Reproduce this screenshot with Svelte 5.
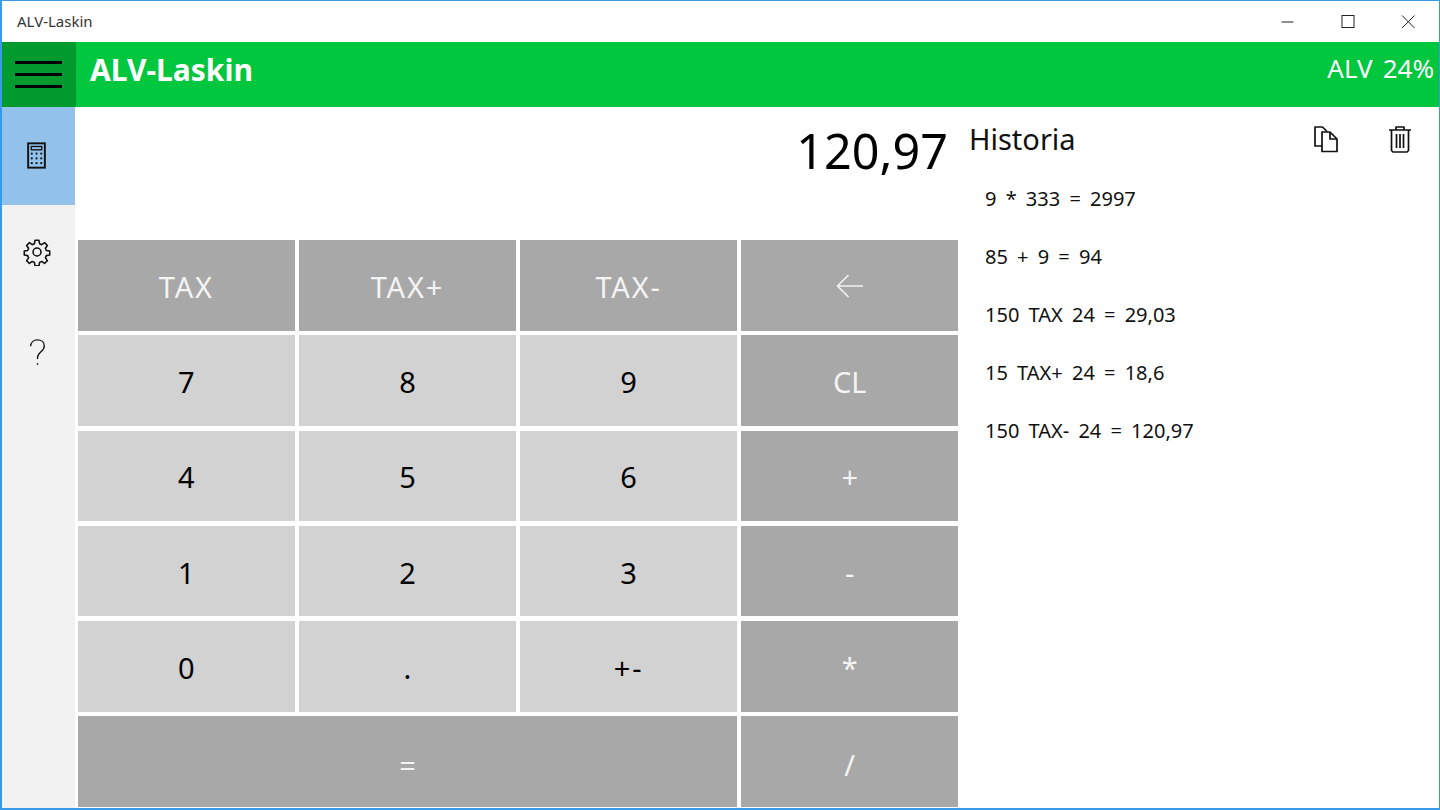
<script>
  const keys = [
    { label: 'TAX', kind: 'op', spaced: true },
    { label: 'TAX+', kind: 'op', spaced: true },
    { label: 'TAX-', kind: 'op', spaced: true },
    { label: 'back', kind: 'op', icon: true },
    { label: '7' }, { label: '8' }, { label: '9' },
    { label: 'CL', kind: 'op' },
    { label: '4' }, { label: '5' }, { label: '6' },
    { label: '+', kind: 'op' },
    { label: '1' }, { label: '2' }, { label: '3' },
    { label: '-', kind: 'op' },
    { label: '0' }, { label: '.' }, { label: '+-', spaced: true },
    { label: '*', kind: 'op' },
    { label: '=', kind: 'op', wide: true },
    { label: '/', kind: 'op', low: true }
  ]

  const history = [
    '9 * 333 = 2997',
    '85 + 9 = 94',
    '150 TAX 24 = 29,03',
    '15 TAX+ 24 = 18,6',
    '150 TAX- 24 = 120,97'
  ]
</script>

<div class="window">
  <div class="titlebar">
    <span class="title">ALV-Laskin</span>
    <div class="controls">
      <button class="ctl" aria-label="Minimize">
        <svg width="14" height="14" viewBox="0 0 14 14"><path d="M0.5 7h12" stroke="#222" fill="none" /></svg>
      </button>
      <button class="ctl" aria-label="Maximize">
        <svg width="14" height="14" viewBox="0 0 14 14"><rect x="1" y="0.5" width="12" height="12" stroke="#222" fill="none" /></svg>
      </button>
      <button class="ctl" aria-label="Close">
        <svg width="14" height="14" viewBox="0 0 14 14"><path d="M1 0.5l12.5 12.5M13.5 0.5L1 13" stroke="#222" fill="none" /></svg>
      </button>
    </div>
  </div>

  <header class="appbar">
    <button class="burger" aria-label="Menu">
      <span></span><span></span><span></span>
    </button>
    <h1>ALV-Laskin</h1>
    <div class="rate"><span>ALV</span><span>24%</span></div>
  </header>

  <div class="body">
    <nav class="side">
      <button class="nav active" aria-label="Calculator">
        <svg width="19" height="27" viewBox="0 0 20 28" fill="none" stroke="#111">
          <rect x="1.2" y="1.2" width="17.6" height="25.6" stroke-width="2" />
          <rect x="4.5" y="4.5" width="11" height="3.5" stroke-width="1.4" />
          <g fill="#111" stroke="none">
            <rect x="4" y="11" width="2" height="2" /><rect x="9" y="11" width="2" height="2" /><rect x="14" y="11" width="2" height="2" />
            <rect x="4" y="16" width="2" height="2" /><rect x="9" y="16" width="2" height="2" /><rect x="14" y="16" width="2" height="2" />
            <rect x="4" y="21" width="2" height="2" /><rect x="9" y="21" width="2" height="2" /><rect x="14" y="21" width="2" height="2" />
          </g>
        </svg>
      </button>
      <button class="nav gear" aria-label="Settings">
        <svg width="28" height="28" viewBox="0 0 24 24" fill="none" stroke="#111" stroke-width="1.35" stroke-linejoin="round">
          <circle cx="12" cy="12" r="3.4" />
          <path d="M10.3 2h3.4l.5 2.9 1.9.8 2.4-1.7 2.4 2.4-1.7 2.4.8 1.9 2.9.5v3.4l-2.9.5-.8 1.9 1.7 2.4-2.4 2.4-2.4-1.7-1.9.8-.5 2.9h-3.4l-.5-2.9-1.9-.8-2.4 1.7-2.4-2.4 1.7-2.4-.8-1.9-2.9-.5v-3.4l2.9-.5.8-1.9-1.7-2.4 2.4-2.4 2.4 1.7 1.9-.8z" />
        </svg>
      </button>
      <button class="nav" aria-label="Help">
        <svg width="17" height="29" viewBox="0 0 18 30" fill="none" stroke="#111" stroke-width="1.4">
          <path d="M1.8 8.5C1.8 4.3 4.8 1.6 9 1.6s7.2 2.6 7.2 6.4c0 3-1.6 4.6-3.8 6.4-2.3 1.9-3.4 3.4-3.4 6.4v1.2" />
          <path d="M9 26.4v1.6" stroke-width="1.6" />
        </svg>
      </button>
    </nav>

    <main class="calc">
      <div class="display">120,97</div>
      <div class="keys">
        {#each keys as key}
          <button class="key" class:op={key.kind === 'op'} class:wide={key.wide} class:low={key.low} class:spaced={key.spaced}>
            {#if key.icon}
              <svg width="27" height="24" viewBox="0 0 27 24" fill="none" stroke="#f0f0f0" stroke-width="1.7">
                <path d="M27 12H2M12.5 1L1.5 12l11 11" />
              </svg>
            {:else}
              {key.label}
            {/if}
          </button>
        {/each}
      </div>
    </main>

    <aside class="history">
      <div class="history-head">
        <h2>Historia</h2>
        <div class="tools">
          <svg width="26" height="28" viewBox="0 0 26 28" fill="none" stroke="#111" stroke-width="1.7" stroke-linejoin="round">
            <path d="M9 21H2V2h7.5L14 6.5" />
            <path d="M9 7h8l7 7v12.5H9z" />
            <path d="M17 7v7h7" />
          </svg>
          <svg width="24" height="28" viewBox="0 0 24 28" fill="none" stroke="#111" stroke-width="1.7" stroke-linejoin="round">
            <path d="M1 5h22M8 5V2h8v3" />
            <path d="M3.5 5v20.5l1.5 1.5h14l1.5-1.5V5" />
            <path d="M8.5 9v14M12 9v14M15.5 9v14" />
          </svg>
        </div>
      </div>
      <ul>
        {#each history as row}
          <li>{row}</li>
        {/each}
      </ul>
    </aside>
  </div>
</div>

<style>
  :global(body) {
    margin: 0;
    background: #fff;
  }

  .window {
    width: 1440px;
    height: 810px;
    box-sizing: border-box;
    border: 1px solid #3a9aea;
    border-bottom-width: 2px;
    border-left-width: 2px;
    display: flex;
    flex-direction: column;
    font-family: "Noto Sans", "Open Sans", sans-serif;
    color: #111;
    overflow: hidden;
  }

  button {
    border: 0;
    padding: 0;
    background: none;
    font: inherit;
    color: inherit;
  }

  .titlebar {
    height: 41px;
    display: flex;
    align-items: center;
    justify-content: space-between;
    flex: none;
  }

  .title {
    font-size: 15px;
    margin: 0 0 2px 15px;
    color: #333;
  }

  .controls {
    display: flex;
    margin-right: 1px;
  }

  .ctl {
    width: 60px;
    height: 41px;
    display: flex;
    align-items: center;
    justify-content: center;
  }

  .ctl svg {
    display: block;
  }

  .appbar {
    height: 65px;
    flex: none;
    background: #00c73e;
    display: flex;
    align-items: center;
    color: #fff;
  }

  .burger {
    width: 74px;
    height: 100%;
    padding-right: 1px;
    background: #009a2e;
    display: flex;
    flex-direction: column;
    align-items: center;
    justify-content: center;
    gap: 9px;
  }

  .burger span {
    display: block;
    width: 47px;
    height: 3px;
    background: #000;
  }

  h1 {
    margin: 0 0 10px 14px;
    font-size: 30px;
    font-weight: 700;
    line-height: 1;
  }

  .rate {
    margin: 0 5px 14px auto;
    font-size: 26px;
    display: flex;
    gap: 10px;
  }

  .body {
    flex: 1;
    min-height: 0;
    display: flex;
  }

  .side {
    width: 73px;
    flex: none;
    background: #f2f2f2;
    display: flex;
    flex-direction: column;
  }

  .nav {
    height: 98px;
    padding-right: 3px;
    display: flex;
    align-items: center;
    justify-content: center;
  }

  .nav.active {
    background: #92c1e9;
    padding: 0 4px 2px 0;
  }

  .nav.gear {
    padding-bottom: 4px;
  }

  .calc {
    width: 885px;
    flex: none;
    box-sizing: border-box;
    padding: 0 2px 1px 3px;
    display: flex;
    flex-direction: column;
  }

  .display {
    height: 133px;
    flex: none;
    box-sizing: border-box;
    padding: 9px 10px 0 0;
    text-align: right;
    font-size: 48.5px;
    line-height: 68px;
    color: #000;
  }

  .keys {
    flex: 1;
    display: grid;
    grid-template-columns: repeat(4, 1fr);
    grid-template-rows: repeat(6, 1fr);
    gap: 4.6px 4.5px;
  }

  .key {
    background: #d2d2d2;
    font-size: 29px;
    color: #000;
    padding-top: 2px;
    display: flex;
    align-items: center;
    justify-content: center;
  }

  .key.op {
    background: #a8a8a8;
    color: #f4f4f4;
  }

  .key.wide {
    grid-column: span 3;
    padding-top: 5px;
  }

  .key.low {
    padding-top: 5px;
  }

  .key.spaced {
    letter-spacing: 1.8px;
  }

  .history {
    flex: 1;
    min-width: 0;
    padding-left: 9px;
  }

  .history-head {
    display: flex;
    align-items: flex-start;
    justify-content: space-between;
    height: 66px;
  }

  h2 {
    margin: 11px 0 0;
    font-size: 29px;
    font-weight: 400;
    line-height: 42px;
  }

  .tools {
    display: flex;
    gap: 49px;
    margin: 18px 27px 0 0;
  }

  ul {
    list-style: none;
    margin: 0;
    padding: 0 0 0 16px;
  }

  li {
    height: 58px;
    line-height: 52px;
    font-size: 20px;
    word-spacing: 4px;
    color: #111;
  }
</style>
